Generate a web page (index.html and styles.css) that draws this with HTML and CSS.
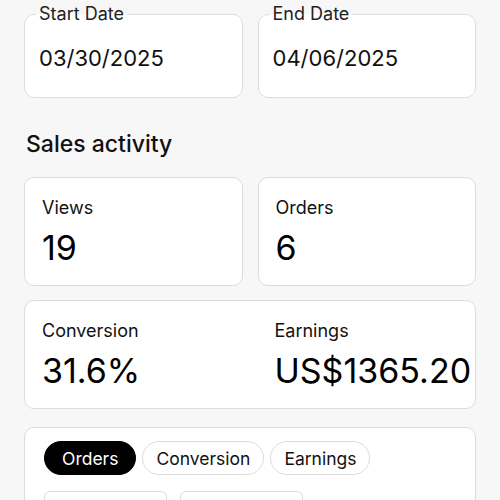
FILE: index.html
```html
<!DOCTYPE html>
<html lang="en">
<head>
    <meta charset="UTF-8">
    <meta name="viewport" content="width=device-width, initial-scale=1.0">
    <title>Sales activity</title>
    <link rel="stylesheet" href="styles.css">
</head>
<body>
    <div class="page">
        <div class="dates">
            <fieldset class="date-field">
                <legend>Start Date</legend>
                <div class="date-value">03/30/2025</div>
            </fieldset>
            <fieldset class="date-field">
                <legend>End Date</legend>
                <div class="date-value">04/06/2025</div>
            </fieldset>
        </div>

        <h2 class="section-title">Sales activity</h2>

        <div class="stats">
            <div class="card stat">
                <div class="stat-label">Views</div>
                <div class="stat-value">19</div>
            </div>
            <div class="card stat">
                <div class="stat-label">Orders</div>
                <div class="stat-value">6</div>
            </div>
            <div class="card stat wide">
                <div class="stat-col">
                    <div class="stat-label">Conversion</div>
                    <div class="stat-value">31.6%</div>
                </div>
                <div class="stat-col">
                    <div class="stat-label">Earnings</div>
                    <div class="stat-value">US$1365.20</div>
                </div>
            </div>
        </div>

        <div class="card chart">
            <div class="tabs">
                <button class="pill active">Orders</button>
                <button class="pill">Conversion</button>
                <button class="pill">Earnings</button>
            </div>
            <div class="ranges">
                <div class="range"></div>
                <div class="range"></div>
            </div>
        </div>
    </div>
</body>
</html>
```

FILE: styles.css
```css
body {
    margin: 0;
    background-color: #f7f7f7;
    font-family: Inter, "Noto Sans", sans-serif;
    color: #111;
}

.page {
    padding: 4px 24px 0;
}

/* date pickers */
.dates {
    display: grid;
    grid-template-columns: 1fr 1fr;
    gap: 15px;
}

.date-field {
    margin: 0;
    padding: 0 16px 0 14px;
    height: 94px;
    box-sizing: border-box;
    border: 1px solid #dcdcdc;
    border-radius: 10px;
    background-color: #fff;
}

.date-field legend {
    padding: 0 3px;
    margin-left: -3px;
    font-size: 18px;
    line-height: 20px;
    color: #222;
}

.date-value {
    padding-top: 21px;
    font-size: 22px;
    color: #111;
}

.section-title {
    margin: 32px 0 19px 2px;
    font-size: 23px;
    font-weight: 500;
    line-height: 28px;
}

/* cards */
.card {
    background-color: #fff;
    border: 1px solid #dcdcdc;
    border-radius: 10px;
    box-sizing: border-box;
}

.stats {
    display: grid;
    grid-template-columns: minmax(0, 1fr) minmax(0, 1fr);
    gap: 14px 15px;
}

.stat {
    height: 109px;
    padding: 19px 17px;
}

.stat.wide {
    grid-column: span 2;
    display: grid;
    grid-template-columns: minmax(0, 1fr) minmax(0, 1fr);
    gap: 15px;
    padding: 19px 0;
}

.stat-col {
    padding: 0 17px;
    white-space: nowrap;
}

.stat-label {
    font-size: 18px;
    line-height: 22px;
    color: #111;
}

.stat-value {
    margin-top: 9px;
    font-size: 34px;
    line-height: 40px;
    color: #000;
}

/* chart card */
.chart {
    margin-top: 18px;
    height: 120px;
    padding: 13px 19px;
}

.tabs {
    display: flex;
    gap: 6px;
}

.pill {
    height: 34px;
    padding: 0 13px;
    border: 1px solid #dcdcdc;
    border-radius: 17px;
    background-color: #fff;
    font-family: inherit;
    font-size: 17.5px;
    color: #111;
}

.pill.active {
    padding: 0 17px;
    background-color: #000;
    border-color: #000;
    color: #fff;
}

.ranges {
    display: flex;
    gap: 13px;
    margin-top: 16px;
}

.range {
    width: 123px;
    height: 40px;
    border: 1px solid #dcdcdc;
    border-radius: 6px;
    box-sizing: border-box;
}
```
